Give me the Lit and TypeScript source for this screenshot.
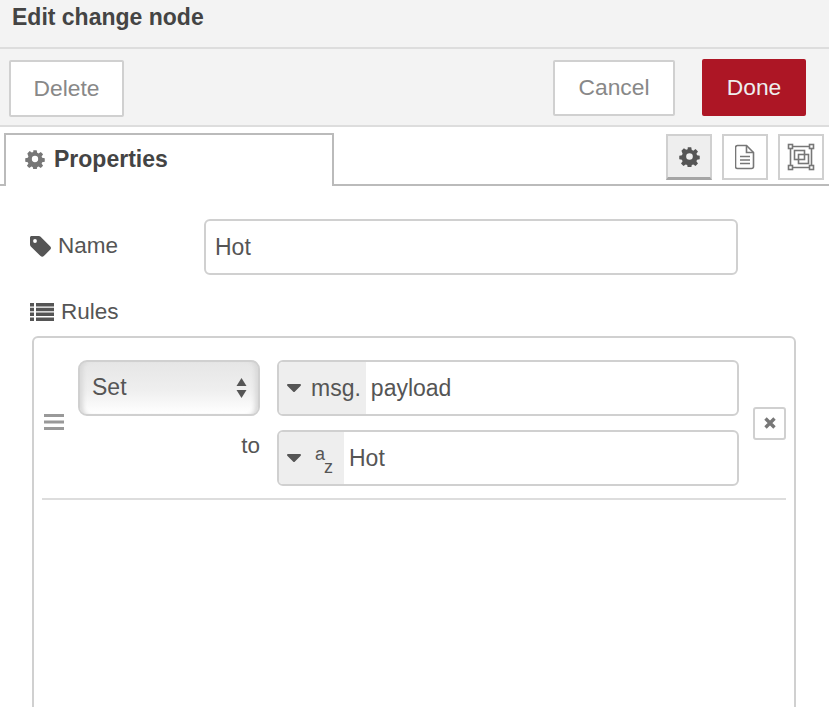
import { LitElement, html, css } from "lit";
import { customElement } from "lit/decorators.js";

const gear = (size: number) => html`<svg class="ic" width=${size} height=${size} viewBox="0 0 24 24" aria-hidden="true"><path fill="currentColor" fill-rule="evenodd" d="M10 1.500h4l.6 3.100c.6.2 1.200.4 1.700.7l2.600-1.800 2.800 2.800-1.800 2.600c.3.500.6 1.100.7 1.700l3.100.6v4l-3.100.6c-.2.600-.4 1.200-.7 1.700l1.800 2.600-2.800 2.800-2.600-1.800c-.5.3-1.100.6-1.700.7l-.6 3.100h-4l-.6-3.100c-.6-.2-1.200-.4-1.700-.7l-2.600 1.800-2.800-2.800 1.800-2.600c-.3-.5-.6-1.100-.7-1.700l-3.100-.6v-4l3.100-.6c.2-.6.4-1.200.7-1.700L2.800 5.300l2.800-2.800 2.600 1.800c.5-.3 1.100-.6 1.700-.7zM12 8.200a3.800 3.800 0 1 0 0 7.600 3.800 3.800 0 0 0 0-7.600z"/></svg>`;

@customElement("app-root")
export class AppRoot extends LitElement {
  static styles = css`
    :host { display: block; width: 829px; height: 707px; overflow: hidden; background: #fff; font-family: "Liberation Sans", Arial, sans-serif; font-size: 22.5px; color: #555; }
    * { box-sizing: border-box; }
    .ic { display: block; flex: none; }
    .title { height: 49px; background: #f3f3f3; border-bottom: 2px solid #ddd; padding: 2px 12px 0; font-weight: 700; line-height: 30px; font-size: 23px; color: #444; }
    .tray { height: 78px; background: #f3f3f3; border-bottom: 2px solid #ddd; display: flex; align-items: center; padding: 0 23px 0 9px; }
    .spacer { flex: 1; }
    .btn { display: flex; align-items: center; justify-content: center; background: #fff; border: 2px solid #d0d0d0; border-radius: 2px; color: #888; font-size: 22.8px; }
    .delete { width: 115px; height: 57px; margin-top: 3px; }
    .cancel { width: 122px; height: 56px; margin-right: 27px; margin-top: 1px; }
    .done { width: 104px; height: 57px; background: #ad1625; border-color: #ad1625; color: #eee; }
    .tabs { height: 59px; display: flex; padding: 6px 5px 0 0; border-bottom: 2px solid #bbb; position: relative; }
    .tab { width: 330px; height: 53px; margin-left: 4px; background: #fff; border: 2px solid #bbb; border-bottom: 0; display: flex; align-items: center; gap: 9px; padding: 0 0 3px 19px; font-weight: 700; font-size: 23px; color: #444; margin-bottom: -2px; position: relative; }
    .tab .ic { color: #777; }
    .tools { margin-left: auto; display: flex; gap: 10px; padding-top: 1px; }
    .tool { width: 46px; height: 46px; border: 2px solid #d0d0d0; background: #fff; display: flex; align-items: center; justify-content: center; color: #777; }
    .tool.on { background: #eee; border-bottom: 3px solid #a5a5a5; color: #555; }
    .content { padding: 33px 33px 0 32px; }
    .name-row { display: flex; align-items: center; height: 56px; }
    .label { display: flex; align-items: center; gap: 7px; color: #555; margin-left: -2px; }
    .name-label { width: 174px; padding-bottom: 2px; }
    .input { width: 534px; height: 56px; border: 2px solid #d0d0d0; border-radius: 6px; padding: 1px 9px 0; display: flex; align-items: center; font-size: 23px; }
    .rules-label { margin-top: 22px; height: 30px; }
    .rules-box { margin-top: 9px; height: 400px; border: 2px solid #d0d0d0; border-radius: 6px 6px 0 0; padding: 22px 8px 0 8px; }
    .rule { display: grid; grid-template-columns: 36px 182px 17px 462px 1fr; grid-template-rows: 56px 56px; row-gap: 14px; padding-bottom: 12px; border-bottom: 2px solid #ddd; }
    .handle { grid-row: 1 / 3; display: flex; align-items: center; padding: 0 0 3px 2px; color: #999; }
    .select { grid-column: 2; display: flex; align-items: center; justify-content: space-between; padding: 0 11px 1px 12px; border: 2px solid #d0d0d0; border-radius: 9px; background: linear-gradient(#e6e6e6 0%, #efefef 55%, #ffffff 100%); box-shadow: inset 6px 0 4px -3px #d8d8d8, inset -6px 0 4px -3px #d8d8d8; font-size: 23px; }
    .to { grid-column: 2; grid-row: 2; display: flex; align-items: flex-start; justify-content: flex-end; line-height: 32px; }
    .typed { grid-column: 4; display: flex; border: 2px solid #d0d0d0; border-radius: 6px; overflow: hidden; font-size: 23px; }
    .row2 { grid-row: 2; }
    .type { background: #eee; display: flex; align-items: center; gap: 10px; padding: 0 5px 0 8px; color: #555; }
    .row2 .type { gap: 14px; padding-right: 11px; }
    .val { flex: 1; display: flex; align-items: center; padding-left: 5px; }
    .az { display: flex; flex-direction: column; font-size: 18px; line-height: 13px; padding-top: 5px; }
    .az span:last-child { margin-left: 9px; }
    .close-cell { grid-column: 5; grid-row: 1 / 3; display: flex; align-items: center; justify-content: flex-end; }
    .close { width: 33px; height: 33px; border: 2px solid #d0d0d0; border-radius: 3px; display: flex; align-items: center; justify-content: center; color: #777; }
  `;

  private caret() {
    return html`<svg class="ic" width="14" height="8" viewBox="0 0 14 8" aria-hidden="true"><path fill="currentColor" d="M1 0h12a1 1 0 0 1 .7 1.700L7.700 7.700a1 1 0 0 1-1.400 0L.3 1.700A1 1 0 0 1 1 0z"/></svg>`;
  }

  render() {
    return html`
      <div class="title">Edit change node</div>
      <div class="tray">
        <div class="btn delete">Delete</div>
        <div class="spacer"></div>
        <div class="btn cancel">Cancel</div>
        <div class="btn done">Done</div>
      </div>
      <div class="tabs">
        <div class="tab">${gear(20)}Properties</div>
        <div class="tools">
          <div class="tool on">${gear(21)}</div>
          <div class="tool">
            <svg class="ic" width="20" height="26" viewBox="0 0 20 26" aria-hidden="true" fill="none" stroke="currentColor" stroke-width="1.600"><path d="M2.500 1.500h9l7 7v14a2 2 0 0 1-2 2h-14a2 2 0 0 1-2-2v-19a2 2 0 0 1 2-2z"/><path d="M11.500 1.500v7h7M5 12.500h10M5 16h10M5 19.500h10"/></svg>
          </div>
          <div class="tool">
            <svg class="ic" width="28" height="28" viewBox="0 0 28 28" aria-hidden="true" fill="none" stroke="currentColor" stroke-width="1.600"><path d="M3.500 5v18M24.500 5v18M5 3.500h18M5 24.500h18"/><rect x="7.500" y="7.500" width="10" height="9"/><rect x="11.500" y="11.500" width="10" height="9"/><rect x="1.500" y="1.500" width="4" height="4" fill="#fff"/><rect x="22.500" y="1.500" width="4" height="4" fill="#fff"/><rect x="1.500" y="22.500" width="4" height="4" fill="#fff"/><rect x="22.500" y="22.500" width="4" height="4" fill="#fff"/></svg>
          </div>
        </div>
      </div>
      <div class="content">
        <div class="name-row">
          <div class="label name-label">
            <svg class="ic" width="21" height="21" viewBox="0 0 21 21" aria-hidden="true"><path fill="currentColor" fill-rule="evenodd" d="M1.500 0h7.300c.7 0 1.300.3 1.800.7l9.700 9.700c.9.900.9 2.300 0 3.200l-6.500 6.500c-.9.900-2.300.9-3.200 0L.8 10.400C.3 9.900 0 9.300 0 8.600V1.500C0 .7.700 0 1.500 0zM5 3.100a1.900 1.900 0 1 0 0 3.800 1.900 1.900 0 0 0 0-3.800z"/></svg>
            Name
          </div>
          <div class="input">Hot</div>
        </div>
        <div class="label rules-label">
          <svg class="ic" width="24" height="18" viewBox="0 0 24 18" aria-hidden="true"><path fill="currentColor" d="M0 0h4v3.500H0zM6 0h18v3.500H6zM0 4.800h4v3.500H0zM6 4.800h18v3.500H6zM0 9.600h4v3.500H0zM6 9.600h18v3.500H6zM0 14.400h4V18H0zM6 14.400h18V18H6z"/></svg>
          Rules
        </div>
        <div class="rules-box">
          <div class="rule">
            <div class="handle">
              <svg class="ic" width="20" height="16" viewBox="0 0 20 16" aria-hidden="true"><path fill="currentColor" d="M0 0h20v3H0zM0 6.500h20v3H0zM0 13h20v3H0z"/></svg>
            </div>
            <div class="select">
              <span>Set</span>
              <svg class="ic" width="11" height="20" viewBox="0 0 11 20" aria-hidden="true"><path fill="currentColor" d="M5.500 0l5 8H.5zM5.500 20l-5-8h10z"/></svg>
            </div>
            <div class="to">to</div>
            <div class="typed">
              <div class="type">${this.caret()}<span>msg.</span></div>
              <div class="val">payload</div>
            </div>
            <div class="typed row2">
              <div class="type">${this.caret()}<div class="az"><span>a</span><span>z</span></div></div>
              <div class="val">Hot</div>
            </div>
            <div class="close-cell">
              <div class="close">
                <svg class="ic" width="12" height="12" viewBox="0 0 12 12" aria-hidden="true"><path fill="none" stroke="currentColor" stroke-width="3.400" d="M1.500 1.500l9 9M10.500 1.500l-9 9"/></svg>
              </div>
            </div>
          </div>
        </div>
      </div>
    `;
  }
}
